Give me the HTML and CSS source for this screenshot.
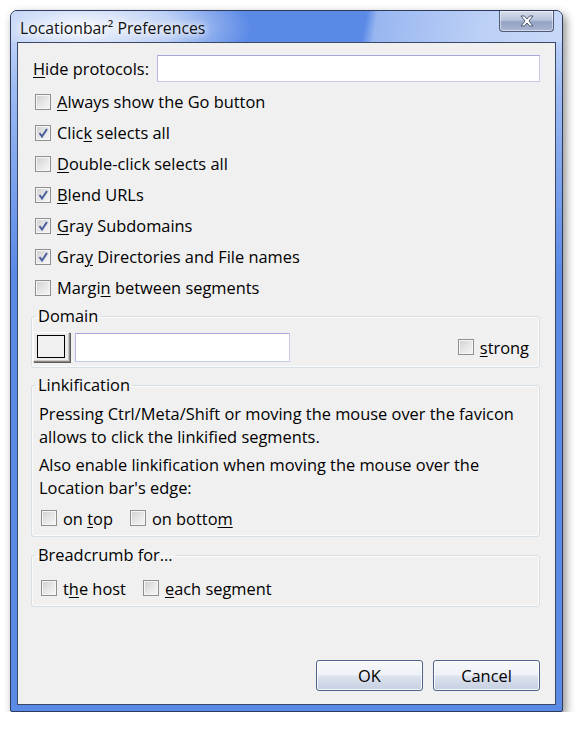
FILE: index.html
```html
<!DOCTYPE html>
<html>
<head>
<meta charset="utf-8">
<link rel="stylesheet" href="styles.css">
</head>
<body>
<div class="window">
  <div class="titlebar">
    <span class="title">Locationbar² Preferences</span>
    <span class="close">
      <svg width="22" height="14" viewBox="0 0 22 14"><path d="M5 2 L8.5 2 L11 5 L13.5 2 L17 2 L13 7 L17 12 L13.5 12 L11 9 L8.5 12 L5 12 L9 7 Z" fill="#fff" stroke="#4b5775" stroke-width="1" stroke-linejoin="round"/></svg>
    </span>
  </div>
  <div class="client">
    <div class="hide-row">
      <span class="label"><u>H</u>ide protocols:</span>
      <span class="textbox grow"></span>
    </div>
    <div class="checks">
      <div class="check"><span class="cb"></span><span><u>A</u>lways show the Go button</span></div>
      <div class="check"><span class="cb on"><svg viewBox="0 0 14 14"><path d="M3.5 7 L6 10.5 L11 3" fill="none" stroke="#4b5f9c" stroke-width="2"/></svg></span><span>Clic<u>k</u> selects all</span></div>
      <div class="check"><span class="cb"></span><span><u>D</u>ouble-click selects all</span></div>
      <div class="check"><span class="cb on"><svg viewBox="0 0 14 14"><path d="M3.5 7 L6 10.5 L11 3" fill="none" stroke="#4b5f9c" stroke-width="2"/></svg></span><span><u>B</u>lend URLs</span></div>
      <div class="check"><span class="cb on"><svg viewBox="0 0 14 14"><path d="M3.5 7 L6 10.5 L11 3" fill="none" stroke="#4b5f9c" stroke-width="2"/></svg></span><span><u>G</u>ray Subdomains</span></div>
      <div class="check"><span class="cb on"><svg viewBox="0 0 14 14"><path d="M3.5 7 L6 10.5 L11 3" fill="none" stroke="#4b5f9c" stroke-width="2"/></svg></span><span>Gra<u>y</u> Directories and File names</span></div>
      <div class="check"><span class="cb"></span><span>Margi<u>n</u> between segments</span></div>
    </div>
    <fieldset class="group domain">
      <legend>Domain</legend>
      <div class="domain-row">
        <span class="colorbtn"><span class="swatch"></span></span>
        <span class="textbox dom"></span>
        <span class="spacer"></span>
        <div class="check"><span class="cb"></span><span><u>s</u>trong</span></div>
      </div>
    </fieldset>
    <fieldset class="group link">
      <legend>Linkification</legend>
      <p class="para">Pressing Ctrl/Meta/Shift or moving the mouse over the favicon allows to click the linkified segments.</p>
      <p class="para second">Also enable linkification when moving the mouse over the Location bar's edge:</p>
      <div class="inline-checks">
        <div class="check"><span class="cb"></span><span>on <u>t</u>op</span></div>
        <div class="check"><span class="cb"></span><span>on botto<u>m</u></span></div>
      </div>
    </fieldset>
    <fieldset class="group crumb">
      <legend>Breadcrumb for...</legend>
      <div class="inline-checks">
        <div class="check"><span class="cb"></span><span>t<u>h</u>e host</span></div>
        <div class="check"><span class="cb"></span><span><u>e</u>ach segment</span></div>
      </div>
    </fieldset>
    <div class="buttons">
      <button class="btn">OK</button>
      <button class="btn">Cancel</button>
    </div>
  </div>
</div>
</body>
</html>
```
FILE: styles.css
```css
html, body {
  margin: 0;
  padding: 0;
  background: #ffffff;
}
body {
  font-family: "Open Sans", "Noto Sans", sans-serif;
  font-size: 16.4px;
  color: #000;
}
.window {
  margin: 10px 0 0 10px;
  width: 551px;
  height: 700px;
  border: 1px solid #2e3b5c;
  border-radius: 7px 7px 2px 2px;
  background:
    linear-gradient(to bottom, rgba(220,232,252,0.9) 0, rgba(200,218,250,0.6) 80px, rgba(91,138,230,0) 260px),
    #5b8ae6;
  box-shadow: 3px 4px 10px rgba(0,0,0,0.45);
  display: flex;
  flex-direction: column;
}
.titlebar {
  height: 31px;
  display: flex;
  align-items: flex-start;
  border-radius: 6px 6px 0 0;
  background:
    radial-gradient(ellipse 170px 55px at 70px 16px, rgba(255,255,255,0.95), rgba(255,255,255,0.6) 55%, rgba(255,255,255,0) 100%),
    linear-gradient(100deg, #5b8ae6 0%, #5b8ae6 64%, #98b6f0 66%, #bcd0f6 85%, #c8d9f8 100%);
}
.title {
  margin: 7px 0 0 9px;
  font-size: 15.8px;
  line-height: 21px;
  color: #111;
  text-shadow: 0 0 6px #fff, 0 0 10px #fff;
  flex: 1;
}
.close {
  width: 53px;
  height: 20px;
  margin-right: 8px;
  border: 1px solid #4d5a78;
  border-top: none;
  border-radius: 0 0 4px 4px;
  background: linear-gradient(to bottom, #d7deec 0%, #b8c4dc 45%, #94a3c3 55%, #a9b7d3 100%);
  box-shadow: inset 0 0 0 1px rgba(255,255,255,0.5);
  display: flex;
  align-items: center;
  justify-content: center;
}
.client {
  margin: 0 6px 6px 6px;
  flex: 1;
  border: 1px solid #3a4866;
  background: #f0f0f0;
  padding: 12px 15px 13px 13px;
  display: flex;
  flex-direction: column;
}
.hide-row {
  display: flex;
  align-items: center;
  height: 27px;
  padding-left: 2px;
}
.label {
  margin-right: 8px;
  white-space: nowrap;
}
.textbox {
  display: block;
  background: #fff;
  border: 1px solid #c9c9ec;
  border-top-color: #a6a6da;
  border-left-color: #b7b7e2;
  box-sizing: border-box;
}
.grow {
  flex: 1;
  height: 27px;
}
.checks {
  margin-top: 4px;
  padding-left: 4px;
  display: flex;
  flex-direction: column;
}
.checks .check {
  height: 31px;
}
.check {
  display: flex;
  align-items: center;
  white-space: nowrap;
}
.cb {
  width: 14px;
  height: 14px;
  border: 1px solid #8f8f8f;
  background: linear-gradient(135deg, #cfcfcf 0%, #e6e6e6 50%, #f7f7f7 100%);
  box-shadow: inset 0 0 0 1px #f6f6f6;
  margin-right: 6px;
  flex: none;
  display: flex;
  align-items: center;
  justify-content: center;
}
.cb svg {
  width: 14px;
  height: 14px;
}
.group {
  margin: 0;
  border: 1px solid #d5dfe5;
  border-radius: 3px;
  box-shadow: inset 0 0 0 1px #fbfbfb;
  padding: 0;
  min-width: 0;
}
.group legend {
  padding: 0 2px;
  line-height: 20px;
}
.domain {
  margin-top: 3px;
  padding: 6px 10px 5px 1px;
}
.domain legend {
  margin-left: 3px;
}
.domain-row {
  display: flex;
  align-items: center;
  height: 30px;
}
.colorbtn {
  width: 37px;
  height: 30px;
  box-sizing: border-box;
  border: 1px solid #fff;
  border-right-color: #8a8a8a;
  border-bottom-color: #8a8a8a;
  box-shadow: 1px 1px 0 #5a5a5a, inset -1px -1px 0 #c8c8c8;
  background: #ececec;
  display: flex;
  align-items: center;
  justify-content: center;
  margin-right: 5px;
}
.swatch {
  width: 26px;
  height: 21px;
  border: 1px solid #000;
  background: #f0f0f0;
  margin: 0 1px 1px 0;
}
.dom {
  width: 215px;
  height: 29px;
}
.spacer {
  flex: 1;
}
.link {
  margin-top: 7px;
  padding: 7px 8px 7px 7px;
}
.link legend,
.crumb legend {
  margin-left: -3px;
}
.para {
  margin: 0;
  line-height: 23px;
}
.para.second {
  margin-top: 5px;
}
.inline-checks {
  display: flex;
  gap: 17px;
  padding-left: 2px;
  height: 22px;
  margin-top: 8px;
}
.crumb {
  margin-top: 8px;
  padding: 12px 8px 7px 7px;
}
.crumb .inline-checks {
  margin-top: 0;
}
.buttons {
  margin-top: auto;
  display: flex;
  justify-content: flex-end;
  gap: 10px;
}
.btn {
  width: 107px;
  height: 31px;
  font-family: "Open Sans", "Noto Sans", sans-serif;
  font-size: 16.4px;
  color: #000;
  border: 1px solid #4f6287;
  border-radius: 3px;
  background: linear-gradient(to bottom, #f7f8fa 0%, #eef1f6 48%, #dde3ee 52%, #c6d0e2 100%);
  box-shadow: inset 0 0 0 1px rgba(255,255,255,0.8);
  padding: 0;
}
u {
  text-decoration-thickness: 1px;
  text-underline-offset: 2px;
}
```
